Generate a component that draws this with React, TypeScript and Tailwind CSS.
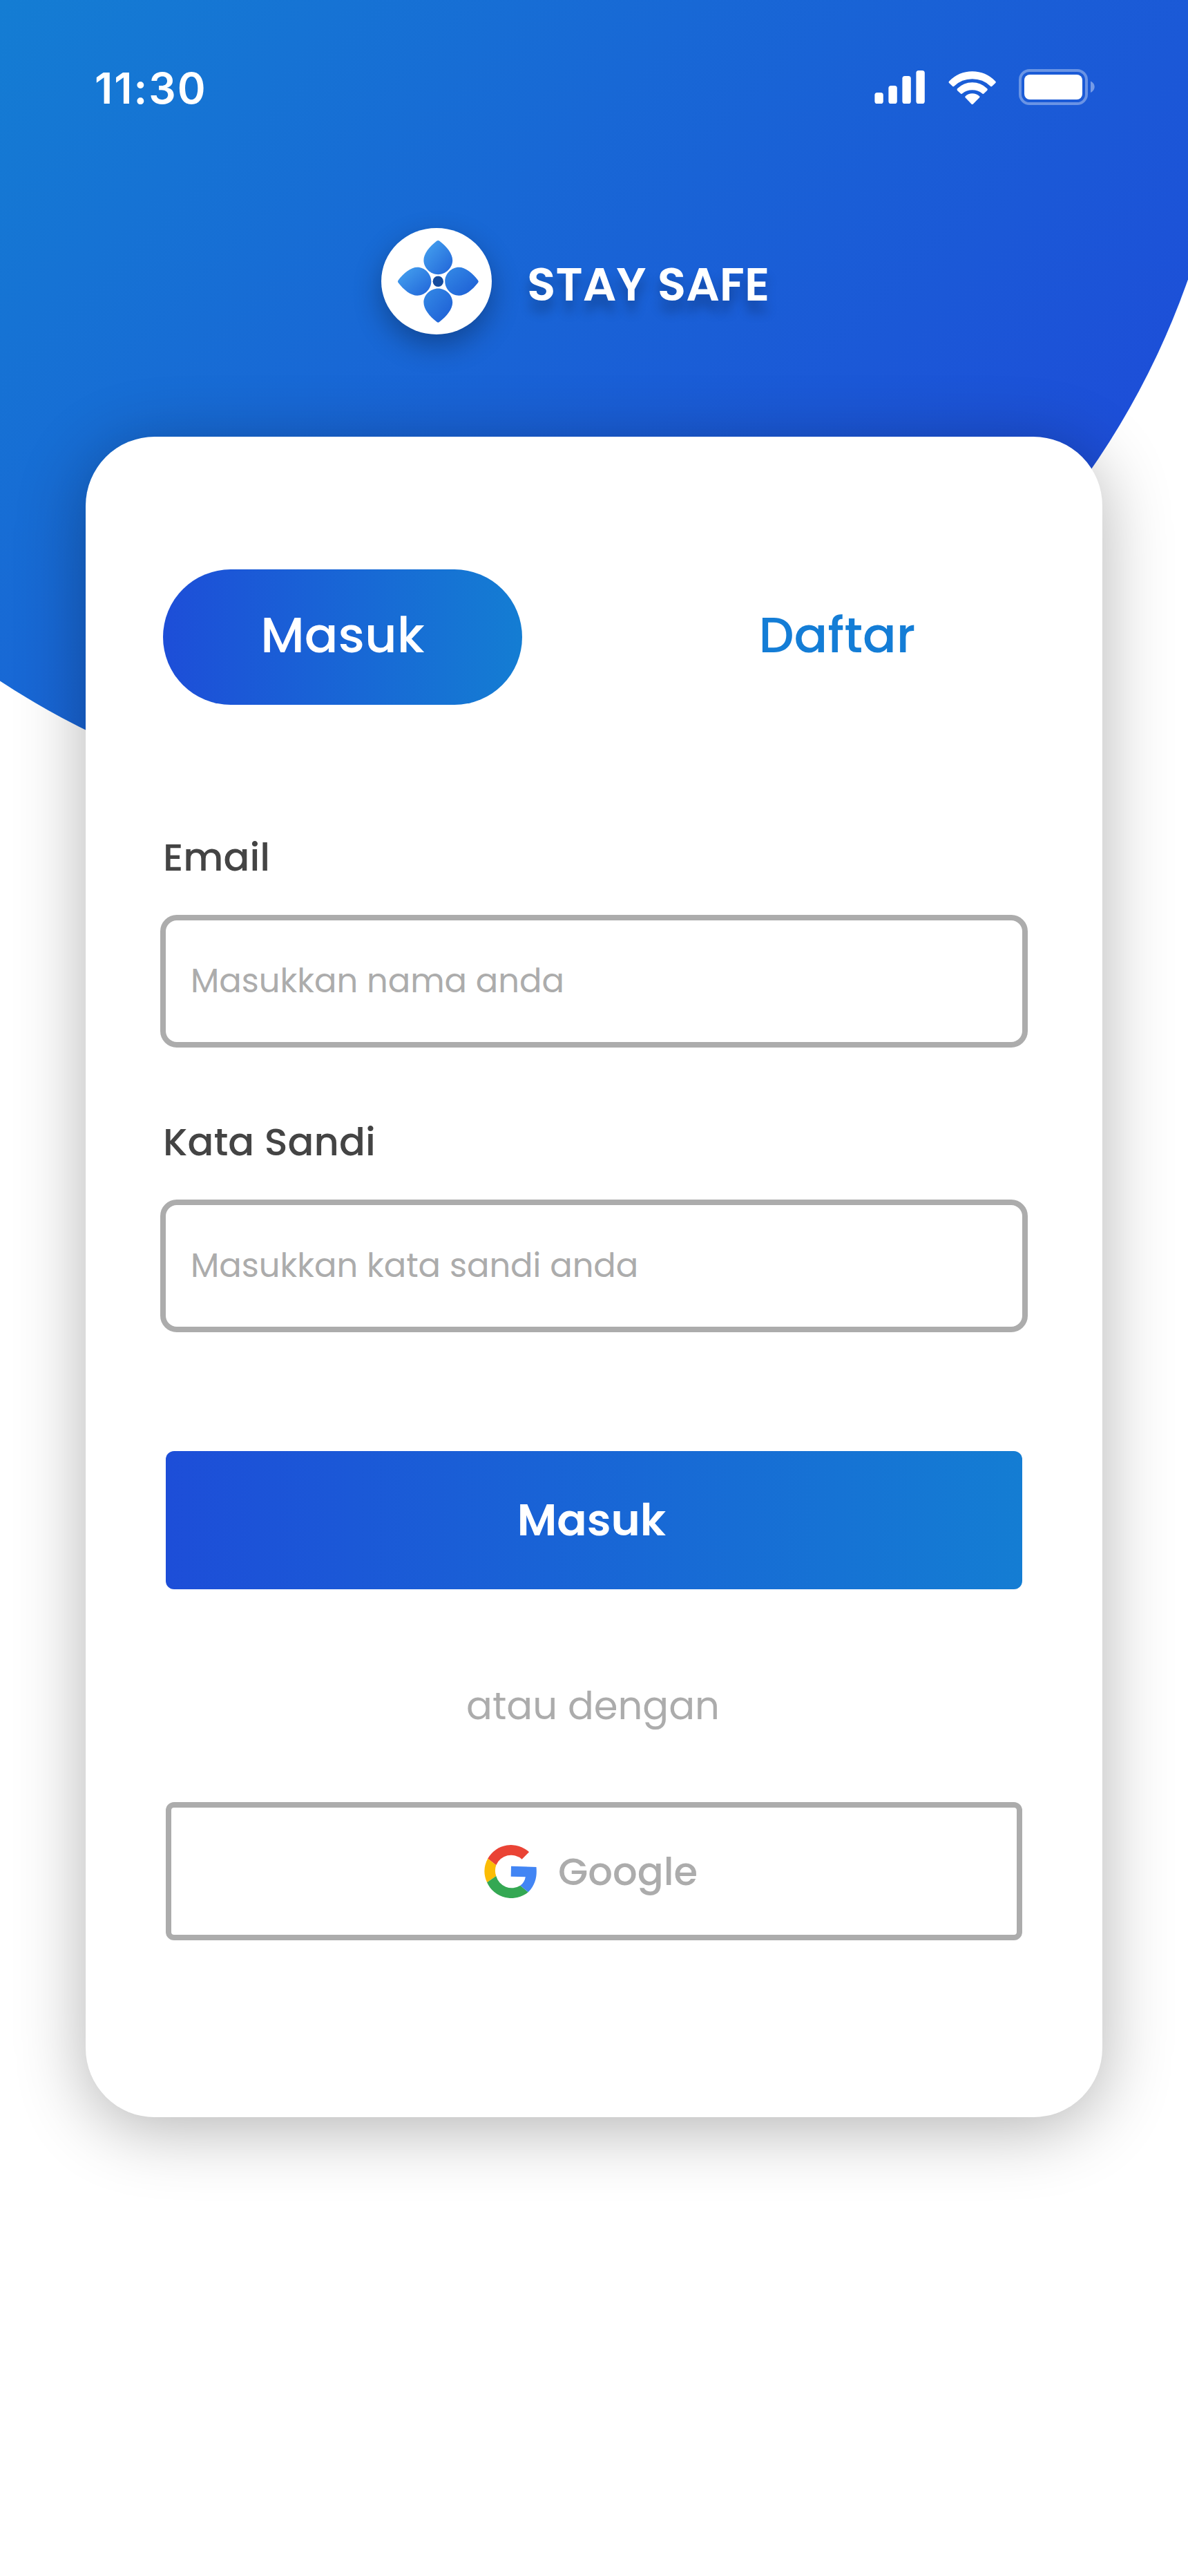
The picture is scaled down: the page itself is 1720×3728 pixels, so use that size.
import type { ReactNode } from 'react';

function SignalIcon() {
  return (
    <svg width="73" height="48" viewBox="0 0 73 48" fill="#fff">
      <rect x="0.4" y="32" width="12.4" height="16" rx="3.6" />
      <rect x="20.4" y="22" width="12.4" height="26" rx="3.6" />
      <rect x="40.4" y="8" width="12.4" height="40" rx="3.6" />
      <rect x="60.4" y="0" width="12.4" height="48" rx="3.6" />
    </svg>
  );
}

function WifiIcon() {
  return (
    <svg width="69" height="48.67" viewBox="399 100 207 146" fill="#fff">
      <path d="M402 144Q445 101 503 101Q561 101 604 144Q607 148 604 151L589 165Q585 168 582 165Q549 134 503 134Q457 134 424 165Q420 168 417 165L402 151Q399 148 402 144Z" />
      <path d="M438 176Q466 149 503 149Q540 149 568 176Q571 180 568 183L554 197Q550 201 546 197Q528 182 503 182Q478 182 460 197Q456 201 452 197L438 184Q435 180 438 176Z" />
      <path d="M473 209Q485 197 503 197Q521 197 534 209Q536 212 534 215L506 243Q503 245 500 243L473 215Q471 212 473 209Z" />
    </svg>
  );
}

function BatteryIcon() {
  return (
    <svg width="110" height="52" viewBox="0 0 110 52">
      <rect x="2" y="2" width="96" height="48" rx="13.5" fill="none" stroke="#fff" strokeOpacity="0.35" strokeWidth="4" />
      <rect x="8" y="8" width="84" height="36" rx="8" fill="#fff" />
      <path d="M104 17.5C107.5 19 109.7 22 109.7 25.5C109.7 29 107.5 32.500 104 34Z" fill="#fff" fillOpacity="0.4" />
    </svg>
  );
}

const PETAL =
  'M-1.700 -58.700Q0 -60 1.700 -58.700C12.500 -50.500 20.900 -40 20.900 -30.500C20.900 -19.500 11 -10.100 0 -10.100C-11 -10.100 -20.900 -19.500 -20.900 -30.500C-20.900 -40 -12.500 -50.500 -1.700 -58.700Z';

function FlowerLogo() {
  return (
    <div className="h-[154px] w-40 rounded-[50%] bg-white shadow-[0_16px_40px_rgba(0,0,0,0.3)]">
      <svg width="160" height="154" viewBox="0 0 160 154">
        <defs>
          <linearGradient id="petalLight" x1="0" y1="0" x2="1" y2="1">
            <stop offset="0.1" stopColor="#439eee" />
            <stop offset="1" stopColor="#2064d8" />
          </linearGradient>
          <linearGradient id="petalDark" x1="0" y1="1" x2="1" y2="0">
            <stop offset="0" stopColor="#348ae6" />
            <stop offset="1" stopColor="#1c5cd4" />
          </linearGradient>
        </defs>
        <g transform="translate(82.3 77.3)">
          <path d={PETAL} fill="url(#petalLight)" />
          <path d={PETAL} fill="url(#petalLight)" transform="matrix(0 0.98 0.985 0 0 0)" />
          <path d={PETAL} fill="url(#petalDark)" transform="matrix(0 0.98 -0.985 0 0 0)" />
          <path d={PETAL} fill="url(#petalDark)" transform="matrix(1 0 0 -1 0 0)" />
          <circle r="7.7" fill="#154c9e" />
        </g>
      </svg>
    </div>
  );
}

function GoogleIcon() {
  return (
    <svg width="76" height="78" viewBox="0 0 76 78">
      <path d="M5.200 20.700A38.700 38.900 0 0 1 65 11.300L54.600 21.700A23.400 23.400 0 0 0 17.300 30.300Z" fill="#EA4335" />
      <path d="M5.200 20.700A38.700 38.900 0 0 0 4.100 55.300L17.300 46A23.400 23.400 0 0 1 17.300 30.300Z" fill="#FBBC05" />
      <path d="M4.100 55.300A38.700 38.900 0 0 0 63.800 69.300L52.300 59.700A23.400 23.400 0 0 1 17.300 46Z" fill="#34A853" />
      <path d="M39 31.700L75.500 33.100C76.500 44 75.500 57.500 63.800 69.300L52.300 59.700C56.500 56.700 59 52.500 59.800 47.300L38.700 46.700Z" fill="#4285F4" />
    </svg>
  );
}

function Field({ label, placeholder, type }: { label: string; placeholder: string; type: string }) {
  return (
    <label className="block">
      <span className="block pt-px pl-1 text-[56px] leading-[84px] font-medium text-[#444444]">{label}</span>
      <input
        type={type}
        placeholder={placeholder}
        className="mt-[41px] block h-48 w-full rounded-3xl border-8 border-[#acacac] bg-white px-9 text-5xl font-normal outline-none placeholder:text-[#acacac]"
      />
    </label>
  );
}

function Tab({ active, children }: { active?: boolean; children: ReactNode }) {
  return (
    <button
      className={
        active
          ? 'flex h-[196px] w-[520px] items-center justify-center rounded-full bg-linear-to-r/srgb from-[#1d4ed8] to-[#147dd3] pb-1.5 text-[72px] leading-[108px] font-medium text-white'
          : 'flex h-[196px] w-[520px] items-center justify-center rounded-full pb-1.5 text-[72px] leading-[108px] font-medium text-[#147dd6]'
      }
    >
      {children}
    </button>
  );
}

export default function App() {
  return (
    <div className="relative isolate h-[3728px] w-[1720px] overflow-hidden bg-white font-['Poppins','Open_Sans',sans-serif]">
      <div className="absolute top-[-1129px] left-[-519px] -z-10 size-[2304px] rounded-full bg-[linear-gradient(135deg,#147dd3_1165px,#1d4ed8_2770px)]" />

      <header className="flex h-[252px] items-center justify-between pr-[135px] pl-[137px]">
        <time className="pt-[3px] font-['Inter',sans-serif] text-[62px] leading-none font-semibold tracking-[2px] text-white">11:30</time>
        <div className="flex items-center">
          <SignalIcon />
          <div className="mt-[3px] mr-[33px] ml-[34px]">
            <WifiIcon />
          </div>
          <BatteryIcon />
        </div>
      </header>

      <div className="flex h-[380px] items-start gap-[51px] pt-[78px] pl-[552px]">
        <FlowerLogo />
        <h1 className="pt-[5px] text-[68px] leading-[154px] font-semibold text-white [text-shadow:0_16px_16px_rgba(0,0,0,0.25)]">STAY SAFE</h1>
      </div>

      <main className="mx-auto h-[2432px] w-[1472px] rounded-[100px] bg-white px-[108px] pt-48 shadow-[0_16px_100px_rgba(0,0,0,0.3)]">
        <nav className="flex gap-[196px] pl-1">
          <Tab active>Masuk</Tab>
          <Tab>Daftar</Tab>
        </nav>

        <form className="flex flex-col pt-[178px]">
          <div className="flex flex-col gap-[94px]">
            <Field label="Email" placeholder="Masukkan nama anda" type="email" />
            <Field label="Kata Sandi" placeholder="Masukkan kata sandi anda" type="text" />
          </div>

          <button
            type="button"
            className="mx-2 mt-[172px] h-[200px] rounded-xl bg-linear-to-r/srgb from-[#1d4ed8] to-[#147dd3] pr-[7px] text-[64px] leading-24 font-semibold text-white"
          >
            Masuk
          </button>

          <p className="mt-[127px] pr-[3px] text-center text-[56px] leading-[84px] text-[#acacac]">atau dengan</p>

          <button
            type="button"
            className="mx-2 mt-[97px] flex h-[200px] items-center justify-center gap-[31px] rounded-xl border-8 border-[#acacac] pr-[9px] text-[56px] leading-[84px] font-medium text-[#acacac]"
          >
            <GoogleIcon />
            <span className="pt-px">Google</span>
          </button>
        </form>
      </main>
    </div>
  );
}
